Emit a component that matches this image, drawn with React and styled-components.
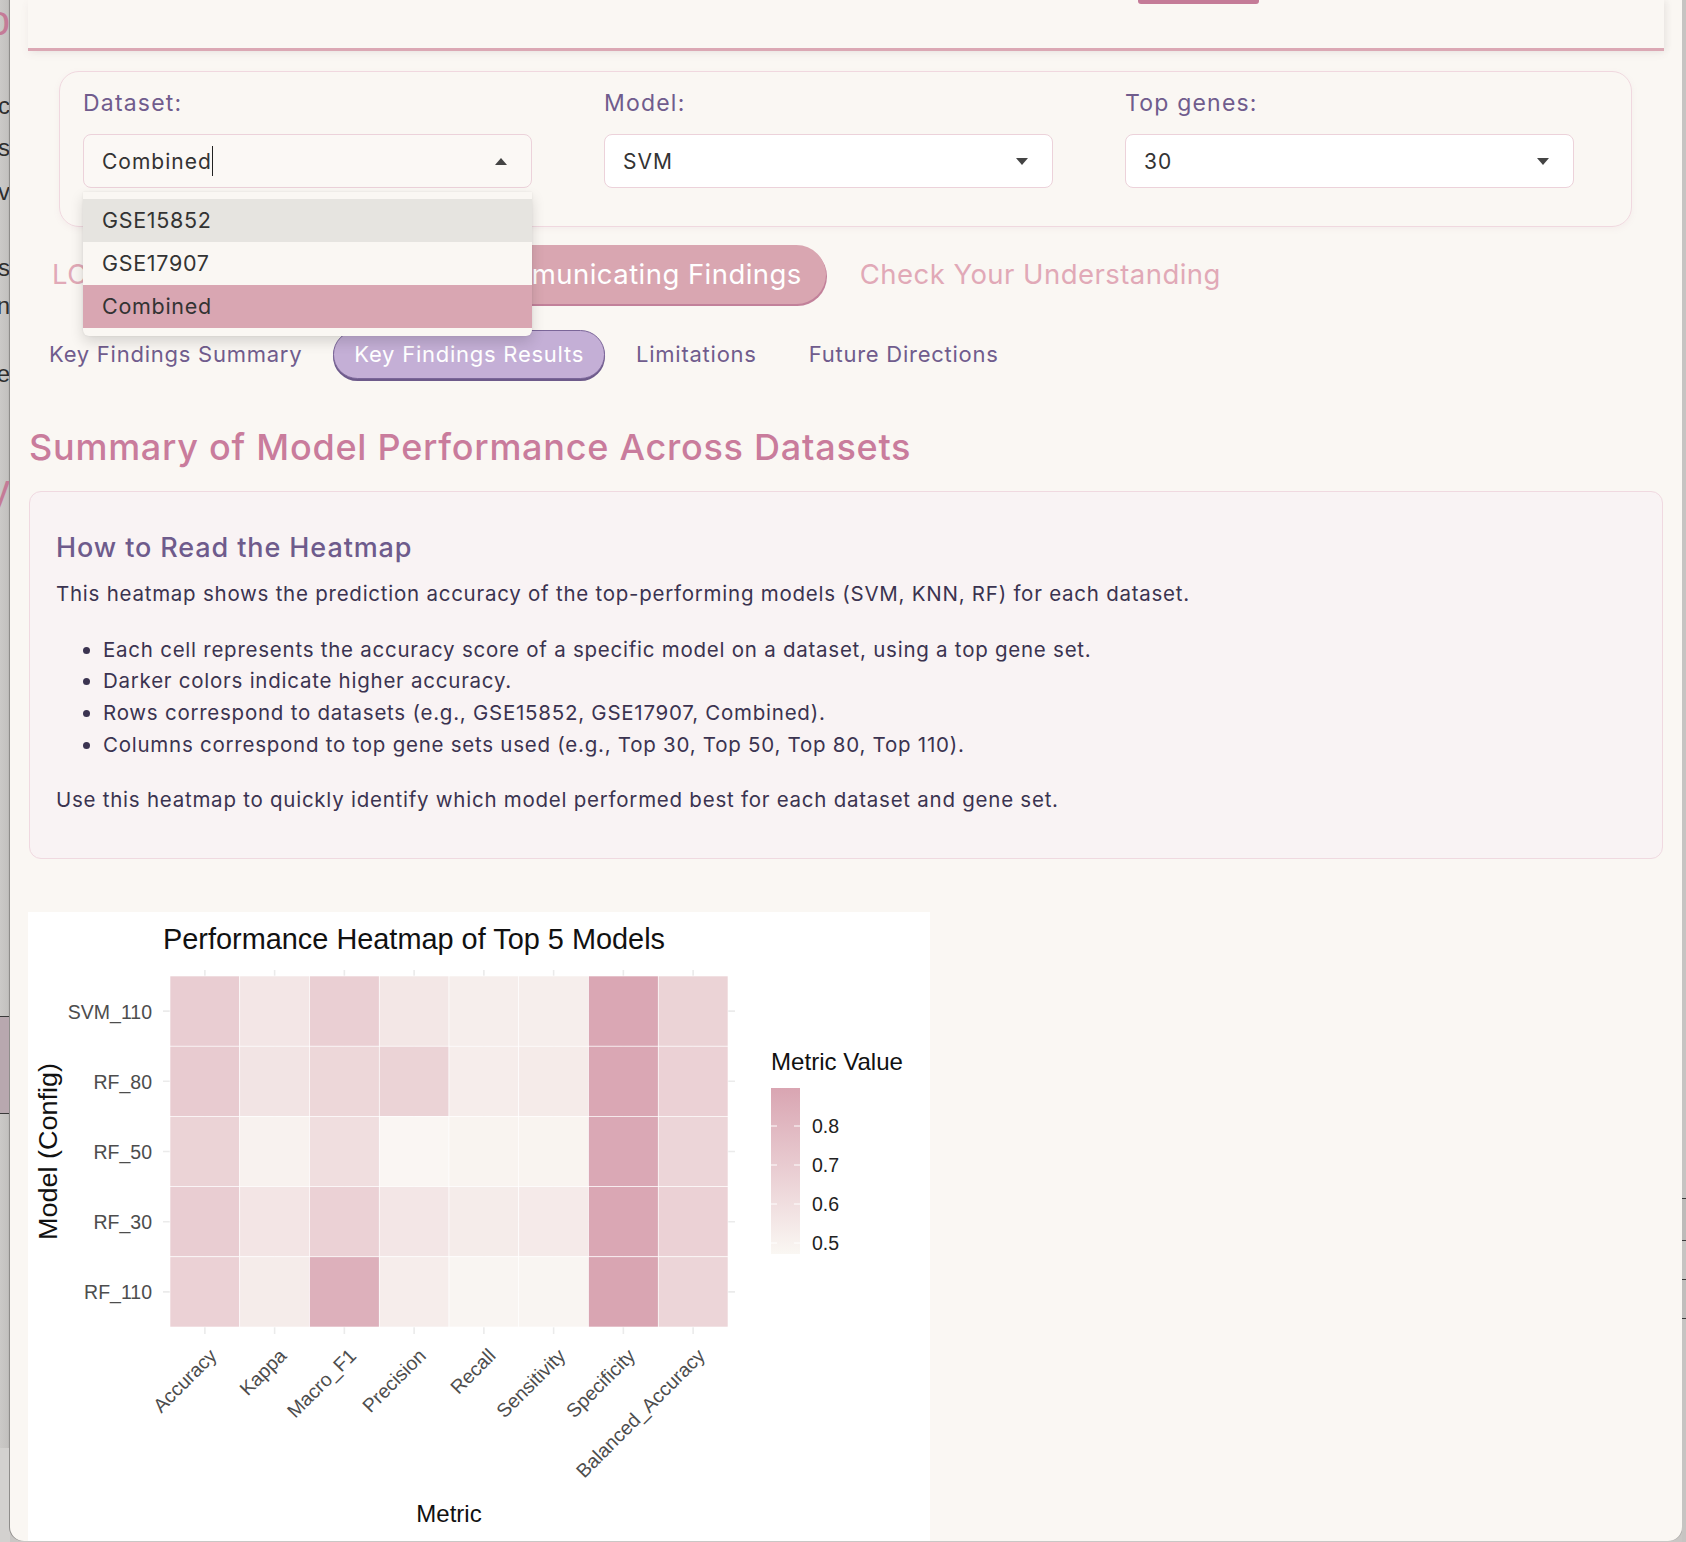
import React from 'react'
import styled, { createGlobalStyle } from 'styled-components'

const GlobalStyle = createGlobalStyle`
    html, body {
        margin: 0;
        padding: 0;
        background: #c9c7c5;
    }
    body {
        font-family: Inter, 'Noto Sans', 'Liberation Sans', sans-serif;
        color: #3b3350;
    }
    * {
        box-sizing: border-box;
    }
`

const Screen = styled.div`
    display: flex;
    height: 1542px;
    width: 1686px;
    overflow: hidden;
    background: #c9c7c5;
`

/* ---------- the app behind the window (only a sliver shows) ---------- */

const BackStrip = styled.div`
    width: 10px;
    flex: none;
    display: flex;
    flex-direction: column;
    overflow: hidden;
    background: linear-gradient(to right, #cbc9c7 0%, #c3c1bf 80%, #a9a7a5 100%);
    font-family: 'Liberation Sans', Arial, sans-serif;
`
const StripLine = styled.div`
    display: flex;
    justify-content: flex-end;
    white-space: nowrap;
    height: ${(p) => p.$h}px;
    line-height: ${(p) => p.$h}px;
    margin-top: ${(p) => p.$gap}px;
    font-size: ${(p) => p.$size}px;
    color: ${(p) => p.$color || '#2e2e2e'};
`
const StripBlock = styled.div`
    flex: none;
    margin-top: ${(p) => p.$gap}px;
    height: ${(p) => p.$h}px;
    background: ${(p) => p.$bg};
    border-top: ${(p) => (p.$lined ? '1px solid #3a3a3a' : 'none')};
    border-bottom: ${(p) => (p.$lined ? '1px solid #3a3a3a' : 'none')};
`
const RightStrip = styled.div`
    width: 4px;
    flex: none;
    display: flex;
    flex-direction: column;
    background: #c6c4c2;
`

/* ---------- window ---------- */

const Window = styled.div`
    flex: 1;
    height: 1541px;
    background: #faf7f3;
    border-radius: 0 0 14px 14px;
    box-shadow: -1px 0 0 #8f8d8b, 1px 0 0 #b0aeac;
    overflow: hidden;
    padding: 0 18px;
`

const Navbar = styled.div`
    height: 51px;
    display: flex;
    align-items: flex-start;
    border-bottom: 3px solid #dba8b4;
    box-shadow: 0 3px 8px rgba(120, 90, 100, 0.07), 4px 0 6px rgba(0, 0, 0, 0.04);
`
const NavIndicator = styled.div`
    margin-left: 1110px;
    width: 121px;
    height: 4px;
    border-radius: 0 0 3px 3px;
    background: #c47b97;
`

/* ---------- filters ---------- */

const FilterCard = styled.div`
    margin: 20px 32px 0 31px;
    padding: 15px 23px 38px;
    border: 1px solid #f0d8df;
    border-radius: 20px;
    box-shadow: 0 2px 6px rgba(180, 130, 150, 0.08);
    display: grid;
    grid-template-columns: repeat(3, 449px);
    column-gap: 72px;
`
const Field = styled.div`
    display: flex;
    flex-direction: column;
`
const FieldLabel = styled.label`
    font-size: 23px;
    line-height: 33px;
    letter-spacing: 1.2px;
    color: #705c8d;
    margin-bottom: 14px;
`
const SelectWrap = styled.div`
    position: relative;
`
const SelectBox = styled.div`
    height: 54px;
    display: flex;
    align-items: center;
    padding: 0 24px 0 18px;
    border: 1px solid #ecd2da;
    border-radius: 8px;
    background: ${(p) => (p.$open ? '#fbf8f5' : '#ffffff')};
    font-size: 21px;
    letter-spacing: 1px;
    color: #333;
`
const Caret = styled.span`
    display: inline-block;
    width: 1.5px;
    height: 30px;
    margin-left: 0;
    background: #222;
`
const Arrow = styled.span`
    margin-left: auto;
    width: 0;
    height: 0;
    border-left: 6px solid transparent;
    border-right: 6px solid transparent;
    ${(p) => (p.$up ? 'border-bottom: 7px solid #444;' : 'border-top: 7px solid #444;')}
`
const Menu = styled.ul`
    position: absolute;
    left: 0;
    right: 0;
    top: calc(100% + 4px);
    margin: 0;
    padding: 7px 0 8px;
    list-style: none;
    background: #faf7f3;
    border-radius: 0 0 6px 6px;
    box-shadow: 0 6px 14px rgba(0, 0, 0, 0.14), 0 0 2px rgba(0, 0, 0, 0.08);
    z-index: 5;
`
const MenuItem = styled.li`
    height: 43px;
    line-height: 43px;
    padding-left: 19px;
    font-size: 21.5px;
    letter-spacing: 0.7px;
    color: #333;
    background: ${(p) => (p.$selected ? '#d9a6b2' : p.$hover ? '#e6e4e0' : 'transparent')};
`

/* ---------- tabs ---------- */

const TabRow = styled.div`
    display: flex;
    align-items: center;
    gap: 10px;
    margin-top: ${(p) => p.$top}px;
`
const MainTab = styled.div`
    height: 59px;
    line-height: 59px;
    padding: 0 24px;
    border-radius: 30px;
    font-size: 27.5px;
    letter-spacing: 0.45px;
    white-space: nowrap;
    color: ${(p) => (p.$active ? '#ffffff' : '#e1a9b7')};
    background: ${(p) => (p.$active ? '#d9a6b1' : 'transparent')};
    box-shadow: ${(p) => (p.$active ? '1px 2px 0 #c2819a' : 'none')};
`
const SubTab = styled.div`
    height: 49px;
    line-height: 47px;
    padding: 0 20px;
    border-radius: 25px;
    font-size: 22px;
    letter-spacing: 0.75px;
    white-space: nowrap;
    color: ${(p) => (p.$active ? '#ffffff' : '#705c8d')};
    background: ${(p) => (p.$active ? '#c4afd6' : 'transparent')};
    border: 1px solid ${(p) => (p.$active ? '#7b6699' : 'transparent')};
    box-shadow: ${(p) => (p.$active ? '0 2px 0 #6d5a8a' : 'none')};
`

/* ---------- content ---------- */

const Heading = styled.h3`
    margin: 47px 0 0 1px;
    font-size: 36px;
    line-height: 43px;
    font-weight: 500;
    letter-spacing: 0.75px;
    color: #c97c9c;
`
const InfoBox = styled.section`
    margin: 22px 1px 0;
    padding: 40px 26px 43px;
    background: #f9f3f4;
    border: 1px solid #f0d9e0;
    border-radius: 12px;
    font-size: 20.5px;
    letter-spacing: 0.75px;
    color: #3b3350;
`
const InfoTitle = styled.h4`
    margin: 0;
    font-size: 27px;
    line-height: 31px;
    font-weight: 500;
    letter-spacing: 0.9px;
    color: #6e5b8c;
`
const Para = styled.p`
    margin: ${(p) => p.$top}px 0 0;
    line-height: 31px;
`
const Bullets = styled.ul`
    margin: 24.5px 0 0;
    padding-left: 47px;
    line-height: 31.7px;
`

const PlotFrame = styled.div`
    margin-top: 53px;
    width: 902px;
    height: 640px;
    background: #ffffff;
`

/* ---------- heatmap ---------- */

const metrics = ['Accuracy', 'Kappa', 'Macro_F1', 'Precision', 'Recall', 'Sensitivity', 'Specificity', 'Balanced_Accuracy']
const rows = [
    { name: 'SVM_110', values: [0.69, 0.56, 0.68, 0.557, 0.52, 0.52, 0.885, 0.66] },
    { name: 'RF_80', values: [0.7, 0.57, 0.64, 0.66, 0.525, 0.535, 0.885, 0.67] },
    { name: 'RF_50', values: [0.66, 0.5, 0.6, 0.475, 0.49, 0.49, 0.88, 0.65] },
    { name: 'RF_30', values: [0.69, 0.565, 0.67, 0.56, 0.53, 0.54, 0.885, 0.67] },
    { name: 'RF_110', values: [0.67, 0.53, 0.84, 0.525, 0.48, 0.48, 0.897, 0.65] },
]
const LO = 0.472
const HI = 0.897
const low = [250, 247, 243]
const high = [217, 165, 178]

const fillFor = (v) => {
    const t = Math.max(0, Math.min(1, (v - LO) / (HI - LO)))
    const c = low.map((l, i) => Math.round(l + (high[i] - l) * t))
    return `rgb(${c[0]},${c[1]},${c[2]})`
}

const PX = 142
const PY = 64
const CW = 69.75
const RH = 70.2
const legendY = (v) => 331 - (v - 0.5) * 390

const Heatmap = () => (
    <svg width="902" height="640" viewBox="0 0 902 640" fontFamily="'Liberation Sans', Arial, sans-serif">
        <defs>
            <linearGradient id="legendFill" x1="0" y1="0" x2="0" y2="1">
                <stop offset="0" stopColor={fillFor(HI)} />
                <stop offset="1" stopColor={fillFor(LO)} />
            </linearGradient>
        </defs>

        <text x="135" y="37" fontSize="30" fill="#111" textLength="502" lengthAdjust="spacingAndGlyphs">
            Performance Heatmap of Top 5 Models
        </text>

        {/* grid lines peeking out past the tiles */}
        {rows.map((r, i) => (
            <line key={r.name} x1="135" x2="707" y1={PY + RH * (i + 0.5)} y2={PY + RH * (i + 0.5)} stroke="#ebebeb" strokeWidth="1.6" />
        ))}
        {metrics.map((m, j) => (
            <line key={m} x1={PX + CW * (j + 0.5)} x2={PX + CW * (j + 0.5)} y1="58" y2="422" stroke="#ebebeb" strokeWidth="1.6" />
        ))}

        {rows.map((r, i) =>
            r.values.map((v, j) => (
                <rect
                    key={`${r.name}-${j}`}
                    x={PX + CW * j}
                    y={PY + RH * i}
                    width={CW}
                    height={RH}
                    fill={fillFor(v)}
                    stroke="#ffffff"
                    strokeWidth="0.6"
                />
            ))
        )}

        {rows.map((r, i) => (
            <text key={r.name} x="124" y={PY + RH * (i + 0.5) + 7.5} fontSize="19.5" fill="#4d4d4d" textAnchor="end">
                {r.name}
            </text>
        ))}

        {metrics.map((m, j) => {
            const x = PX + CW * (j + 0.5) + 13
            const y = 445
            return (
                <text key={m} x={x} y={y} fontSize="19.5" fill="#4d4d4d" textAnchor="end" transform={`rotate(-45 ${x} ${y})`}>
                    {m}
                </text>
            )
        })}

        <text
            transform="translate(29 239.5) rotate(-90)"
            fontSize="25"
            fill="#111"
            textAnchor="middle"
            textLength="177"
            lengthAdjust="spacingAndGlyphs"
        >
            Model (Config)
        </text>
        <text x="421" y="610" fontSize="24" fill="#111" textAnchor="middle">
            Metric
        </text>

        <text x="743" y="158" fontSize="24" fill="#111" textLength="132" lengthAdjust="spacingAndGlyphs">
            Metric Value
        </text>
        <rect x="743" y="176" width="29" height="166" fill="url(#legendFill)" />
        {[0.5, 0.6, 0.7, 0.8].map((v) => (
            <g key={v}>
                <line x1="743" x2="749" y1={legendY(v)} y2={legendY(v)} stroke="#fff" strokeWidth="1" />
                <line x1="766" x2="772" y1={legendY(v)} y2={legendY(v)} stroke="#fff" strokeWidth="1" />
                <text x="784" y={legendY(v) + 7} fontSize="19.5" fill="#222">
                    {v.toFixed(1)}
                </text>
            </g>
        ))}
    </svg>
)

/* ---------- page ---------- */

const stripLines = [
    { gap: 0, h: 42, size: 42, color: '#c47b97', text: 'o' },
    { gap: 52, h: 24, size: 24, text: 'ec' },
    { gap: 18, h: 24, size: 24, text: 's' },
    { gap: 20, h: 24, size: 24, text: 'tv' },
    { gap: 52, h: 24, size: 24, text: 's' },
    { gap: 14, h: 24, size: 24, text: 'n' },
    { gap: 44, h: 24, size: 24, text: 'fe' },
    { gap: 82, h: 44, size: 42, color: '#c47b97', text: 'y' },
]

export default function App() {
    return (
        <Screen>
            <GlobalStyle />
            <BackStrip>
                {stripLines.map((l, i) => (
                    <StripLine key={i} $gap={l.gap} $h={l.h} $size={l.size} $color={l.color}>
                        {l.text}
                    </StripLine>
                ))}
                <StripBlock $gap={504} $h={98} $bg="#b8a8af" $lined />
                <StripBlock $gap={334} $h={460} $bg="#d3d1cf" />
            </BackStrip>

            <Window>
                <Navbar>
                    <NavIndicator />
                </Navbar>

                <FilterCard>
                    <Field>
                        <FieldLabel>Dataset:</FieldLabel>
                        <SelectWrap>
                            <SelectBox $open>
                                Combined
                                <Caret />
                                <Arrow $up />
                            </SelectBox>
                            <Menu>
                                <MenuItem $hover>GSE15852</MenuItem>
                                <MenuItem>GSE17907</MenuItem>
                                <MenuItem $selected>Combined</MenuItem>
                            </Menu>
                        </SelectWrap>
                    </Field>
                    <Field>
                        <FieldLabel>Model:</FieldLabel>
                        <SelectBox>
                            SVM
                            <Arrow />
                        </SelectBox>
                    </Field>
                    <Field>
                        <FieldLabel>Top genes:</FieldLabel>
                        <SelectBox>
                            30
                            <Arrow />
                        </SelectBox>
                    </Field>
                </FilterCard>

                <TabRow $top={18}>
                    <MainTab>LOs &amp; Background Context</MainTab>
                    <MainTab $active>Communicating Findings</MainTab>
                    <MainTab>Check Your Understanding</MainTab>
                </TabRow>

                <TabRow $top={26}>
                    <SubTab>Key Findings Summary</SubTab>
                    <SubTab $active>Key Findings Results</SubTab>
                    <SubTab>Limitations</SubTab>
                    <SubTab>Future Directions</SubTab>
                </TabRow>

                <Heading>Summary of Model Performance Across Datasets</Heading>

                <InfoBox>
                    <InfoTitle>How to Read the Heatmap</InfoTitle>
                    <Para $top={15}>
                        This heatmap shows the prediction accuracy of the top-performing models (SVM, KNN, RF) for each dataset.
                    </Para>
                    <Bullets>
                        <li>Each cell represents the accuracy score of a specific model on a dataset, using a top gene set.</li>
                        <li>Darker colors indicate higher accuracy.</li>
                        <li>Rows correspond to datasets (e.g., GSE15852, GSE17907, Combined).</li>
                        <li>Columns correspond to top gene sets used (e.g., Top 30, Top 50, Top 80, Top 110).</li>
                    </Bullets>
                    <Para $top={24}>Use this heatmap to quickly identify which model performed best for each dataset and gene set.</Para>
                </InfoBox>

                <PlotFrame>
                    <Heatmap />
                </PlotFrame>
            </Window>

            <RightStrip>
                <StripBlock $gap={1198} $h={43} $bg="#bdbbb9" $lined />
                <StripBlock $gap={38} $h={40} $bg="#c0bebc" $lined />
            </RightStrip>
        </Screen>
    )
}
